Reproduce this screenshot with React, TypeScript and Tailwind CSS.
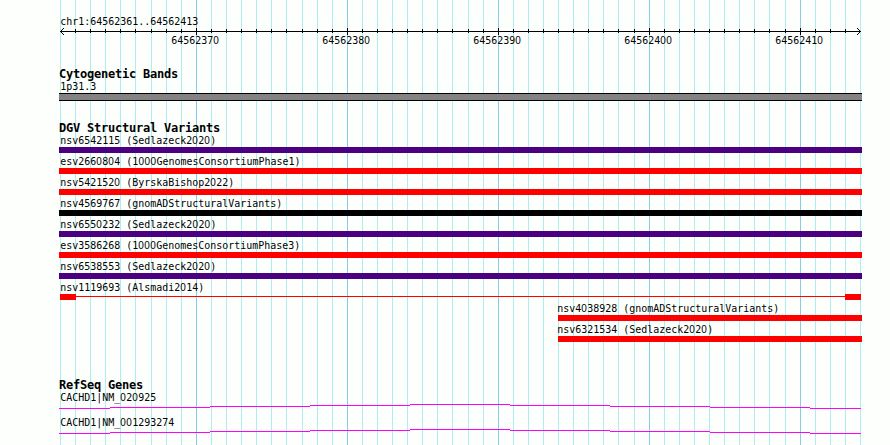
import clsx from 'clsx';

const START = 64562361;
const SPAN = 53;
const ORIGIN = 60;
const WIDTH = 800;

const ticks = Array.from({ length: SPAN + 1 }, (_, i) => ({
  x: Math.round(ORIGIN + (i * WIDTH) / SPAN),
  major: (START + i) % 10 === 0,
}));

const rulerLabels = ['64562370', '64562380', '64562390', '64562400', '64562410'];

const variants = [
  { name: 'nsv6542115 (Sedlazeck2020)', color: 'bg-[#4b0082]' },
  { name: 'esv2660804 (1000GenomesConsortiumPhase1)', color: 'bg-[#ff0000]' },
  { name: 'nsv5421520 (ByrskaBishop2022)', color: 'bg-[#ff0000]' },
  { name: 'nsv4569767 (gnomADStructuralVariants)', color: 'bg-black' },
  { name: 'nsv6550232 (Sedlazeck2020)', color: 'bg-[#4b0082]' },
  { name: 'esv3586268 (1000GenomesConsortiumPhase3)', color: 'bg-[#ff0000]' },
  { name: 'nsv6538553 (Sedlazeck2020)', color: 'bg-[#4b0082]' },
  { name: 'nsv1119693 (Alsmadi2014)', color: 'bg-[#ff0000]', split: true },
  { name: 'nsv4038928 (gnomADStructuralVariants)', color: 'bg-[#ff0000]', partial: true },
  { name: 'nsv6321534 (Sedlazeck2020)', color: 'bg-[#ff0000]', partial: true },
];

const genes = ['CACHD1|NM_020925', 'CACHD1|NM_001293274'];

// Zeros use the sans face, the mono one puts a dot in them
const Label = ({ text, className }: { text: string; className?: string }) => (
  <div
    className={clsx(
      "h-[15px] pt-0.5 pl-[0.4px] origin-left scale-x-[0.906] whitespace-pre font-['DejaVu_Sans_Mono',monospace] text-[11px] leading-[14px] text-black",
      className,
    )}
  >
    {text.split(/(0+)/).map((part, i) =>
      part.startsWith('0') ? (
        <span key={i} className="font-['Liberation_Sans',sans-serif] leading-none tracking-[0.505px]">
          {part}
        </span>
      ) : (
        part
      ),
    )}
  </div>
);

const Heading = ({ text }: { text: string }) => (
  <h2 className="h-[14px] whitespace-pre font-['DejaVu_Sans_Mono',monospace] text-[12px] font-bold leading-[14px] tracking-[-0.224px] text-black">
    {text}
  </h2>
);

const GridLines = () => (
  <svg className="absolute inset-0" width="890" height="445" shapeRendering="crispEdges">
    {ticks.map((t) => (
      <rect key={t.x} x={t.x} y="0" width="1" height="445" fill={t.major ? '#87ceeb' : '#afeeee'} />
    ))}
  </svg>
);

const Ruler = () => (
  <svg className="block" width="890" height="7" shapeRendering="crispEdges">
    <rect x="60" y="3" width="801" height="1" />
    {ticks.slice(1, -1).map((t) => (
      <rect key={t.x} x={t.x} y={t.major ? 0 : 1} width="1" height={t.major ? 7 : 4} />
    ))}
    {[1, 2, 3].map((d) => (
      <g key={d}>
        <rect x={60 + d} y={3 - d} width="1" height="1" />
        <rect x={60 + d} y={3 + d} width="1" height="1" />
        <rect x={860 - d} y={3 - d} width="1" height="1" />
        <rect x={860 - d} y={3 + d} width="1" height="1" />
      </g>
    ))}
  </svg>
);

const GeneLine = () => (
  <svg className="block" width="803" height="5" shapeRendering="crispEdges" fill="#ff00ff">
    {[4, 3, 2, 1, 0, 1, 2, 3, 4].map((y, i) => {
      const from = i === 0 ? 0 : i * 100 - 49;
      const to = i === 8 ? 802 : i * 100 + 51;
      return <rect key={i} x={from} y={y} width={to - from} height="1" />;
    })}
  </svg>
);

const App = () => {
  return (
    <main className="relative h-[445px] w-[890px] overflow-hidden bg-[#fdfffc]">
      <GridLines />
      <div className="relative flex flex-col pt-[13px]">
        {/* Ruler */}
        <Label text="chr1:64562361..64562413" className="ml-[60px]" />
        <Ruler />
        <div className="-mt-[3px] flex gap-[103px] pl-[171.4px]">
          {rulerLabels.map((label) => (
            <div key={label} className="w-12">
              <Label text={label} />
            </div>
          ))}
        </div>

        <div className="ml-[59px] w-[803px]">
          {/* Cytogenetic band */}
          <section className="mt-5">
            <Heading text="Cytogenetic Bands" />
            <Label text="1p31.3" className="-mt-[3px] ml-px" />
            <div className="h-2 border-y border-black bg-[#848284]" />
          </section>

          {/* Structural variants */}
          <section className="mt-5">
            <Heading text="DGV Structural Variants" />
            <div className="-mt-[3px]">
              {variants.map((v) => (
                <div key={v.name} className={clsx(v.partial && 'ml-[499px]')}>
                  <Label text={v.name} className={v.partial ? '-ml-[0.8px]' : 'ml-px'} />
                  {v.split ? (
                    <div className="mx-px flex h-1.5">
                      <div className="w-4 bg-[#ff0000]" />
                      <div className="mt-0.5 h-px flex-1 bg-[#ff0000]" />
                      <div className="w-4 bg-[#ff0000]" />
                    </div>
                  ) : (
                    <div className={clsx('h-1.5', v.color)} />
                  )}
                </div>
              ))}
            </div>
          </section>

          {/* Genes */}
          <section className="mt-9">
            <Heading text="RefSeq Genes" />
            <div className="-mt-[3px] flex flex-col gap-[5px]">
              {genes.map((gene) => (
                <div key={gene}>
                  <Label text={gene} className="ml-px" />
                  <GeneLine />
                </div>
              ))}
            </div>
          </section>
        </div>
      </div>
    </main>
  );
};

export default App;
